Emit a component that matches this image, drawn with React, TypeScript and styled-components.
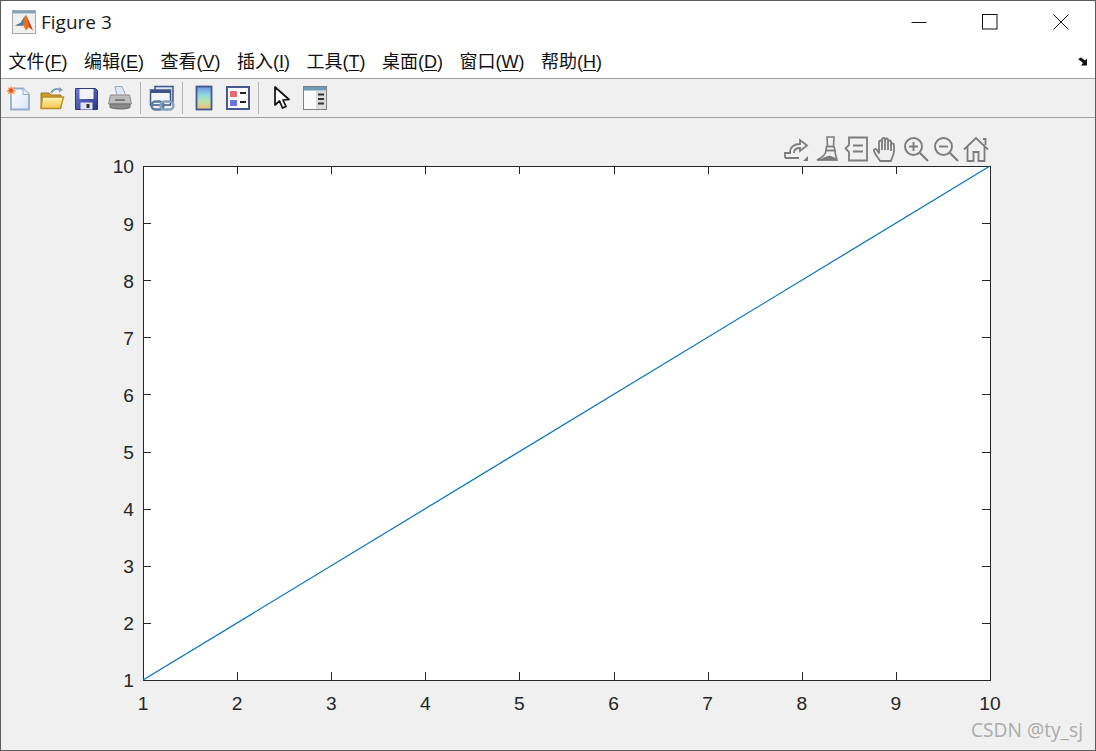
import React from "react";
import styled, { createGlobalStyle } from "styled-components";

const Global = createGlobalStyle`
  html, body { margin: 0; padding: 0; background: #fff; }
  #root { width: 1096px; height: 751px; }
`;

const Window = styled.div`
  width: 1096px; height: 751px; box-sizing: border-box; border: 1px solid #5c5c5c;
  display: flex; flex-direction: column; background: #f0f0f0; overflow: hidden;
  font-family: "Liberation Sans", Arial, sans-serif;
`;
const TitleBar = styled.div`
  height: 43px; flex: none; background: #fff; display: flex; align-items: center; padding: 0 0 0 11px;
`;
const AppIcon = styled.svg`width: 24px; height: 24px; flex: none; margin-top: -1px;`;
const Title = styled.div`
  margin-left: 5px; font: 19px "Open Sans", sans-serif; color: #1a1a1a; flex: 1; margin-top: -2px;
`;
const WinButtons = styled.div`display: flex; align-self: stretch; align-items: center; margin-right: -1px;`;
const WinButton = styled.div`
  width: 71px; height: 43px; display: flex; align-items: center; justify-content: center;
  margin-top: -1px;
`;
const MenuBar = styled.div`
  flex: none; background: #fff; display: flex; align-items: center; padding: 0 8px 3px 7.5px;
  box-sizing: border-box; gap: 16.5px; border-bottom: 1px solid #a0a0a0; position: relative; height: 35px;
`;
const MenuItem = styled.span`
  font: 18px "Liberation Sans", "Noto Sans CJK SC", sans-serif; color: #111; white-space: nowrap;
  u { text-underline-offset: 2px; }
`;
const Undock = styled.svg`position: absolute; right: 5px; top: 13px; width: 12px; height: 10px;`;
const ToolBar = styled.div`
  height: 39px; box-sizing: border-box; flex: none; background: #f0f0f0; border-bottom: 1px solid #a0a0a0; display: flex; align-items: center;
`;
const ToolButton = styled.div<{ $shift?: number }>`
  width: 34px; height: 38px; display: flex; align-items: center; justify-content: center;
  margin-left: ${(p) => p.$shift ?? 0}px;
`;
const ToolIcon = styled.svg`width: 26px; height: 26px;`;
const ToolSep = styled.div<{ $after?: number }>`
  width: 1px; height: 32px; background: #b4b4b4; margin: 0 ${(p) => p.$after ?? 3}px 0 3px;
`;
const Canvas = styled.div`flex: 1; position: relative; background: #f0f0f0;`;
const Plot = styled.svg`display: block; width: 1094px; height: 632px;`;
const AxesBar = styled.div`
  position: absolute; top: 18px; left: 782px; display: flex; gap: 4px;
`;
const AxesIcon = styled.svg`width: 26px; height: 26px; flex: none; color: #7c7c7c;`;
const Watermark = styled.div`
  position: absolute; right: 12px; bottom: 7px; font: 19.200px "Open Sans", sans-serif; color: #ababab;
`;
const Tick = styled.text`font: 19.200px "Liberation Sans", Arial, sans-serif; fill: #262626;`;

const menus: [string, string][] = [["文件", "F"], ["编辑", "E"], ["查看", "V"], ["插入", "I"], ["工具", "T"], ["桌面", "D"], ["窗口", "W"], ["帮助", "H"]];

const L = 143, R = 990, T = 166, B = 680;
const nums = [1, 2, 3, 4, 5, 6, 7, 8, 9, 10];
const xAt = (n: number) => L + ((R - L) * (n - 1)) / 9;
const yAt = (n: number) => B - ((B - T) * (n - 1)) / 9;

export default function App() {
  return (
    <Window>
      <Global />
      <TitleBar>
        <AppIcon viewBox="0 0 24 24">
          <rect x="0.500" y="0.500" width="23" height="23" fill="#f0f0f0" stroke="#a8a8a8" />
          <rect x="1" y="1" width="22" height="2.400" fill="#7fa3bd" />
          <path d="M3 15.500l5.500-2.500 4-6.500 1.500-1.500 3 6.500 4 9-4-3.500-3 3.500-2.500-5-2 .5z" fill="#ea6f1f" />
          <path d="M14 5l3 6.500 4 9-4-3.500-1-6z" fill="#c8401a" />
          <path d="M3 15.500l5.500-2.500 4-6.500-1.500 8.500-2 .5z" fill="#2f86c4" />
        </AppIcon>
        <Title>Figure 3</Title>
        <WinButtons>
          <WinButton>
            <svg width="16" height="16" viewBox="0 0 16 16"><path d="M0.500 8.500h15" stroke="#111" fill="none" /></svg>
          </WinButton>
          <WinButton>
            <svg width="16" height="16" viewBox="0 0 16 16"><rect x="0.500" y="0.500" width="14.500" height="14.500" stroke="#111" fill="none" /></svg>
          </WinButton>
          <WinButton>
            <svg width="16" height="16" viewBox="0 0 16 16"><path d="M0.500 0.500l15 15M15.500 0.500l-15 15" stroke="#111" fill="none" /></svg>
          </WinButton>
        </WinButtons>
      </TitleBar>
      <MenuBar>
        {menus.map(([zh, k]) => (
          <MenuItem key={k}>{zh}(<u>{k}</u>)</MenuItem>
        ))}
        <Undock viewBox="0 0 12 10">
          <path d="M0 2l3-1.500 4 3 2-2v7H3l2-2.500L2 3.500z" fill="#111" />
        </Undock>
      </MenuBar>
      <ToolBar>
        <ToolButton>
          <ToolIcon viewBox="0 0 26 26">
            <defs>
              <linearGradient id="doc" x1="0" y1="0" x2="1" y2="1">
                <stop offset="0" stopColor="#ffffff" />
                <stop offset="1" stopColor="#d6e6f7" />
              </linearGradient>
              <linearGradient id="fold" x1="0" y1="0" x2="0" y2="1">
                <stop offset="0" stopColor="#fff2b0" />
                <stop offset="1" stopColor="#f2c84e" />
              </linearGradient>
              <linearGradient id="disk" x1="0" y1="0" x2="1" y2="1">
                <stop offset="0" stopColor="#6d7bd8" />
                <stop offset="1" stopColor="#2c3486" />
              </linearGradient>
              <linearGradient id="cb" x1="0" y1="0" x2="0" y2="1">
                <stop offset="0" stopColor="#6f94dc" />
                <stop offset="0.350" stopColor="#8fd6e0" />
                <stop offset="0.650" stopColor="#b8e4a8" />
                <stop offset="1" stopColor="#f4b878" />
              </linearGradient>
            </defs>
            <path d="M6 3.500h12l6 6v15H6z" fill="url(#doc)" stroke="#94accb" strokeWidth="1.800" />
            <path d="M18 3.500v6h6" fill="#e6eff9" stroke="#94accb" />
            <path d="M6 0.500l1.500 2.500 2.500-1-1 2.500 2.500 1.500-2.500 1 1 2.500-2.500-1L6 11l-1-2.500-2.500 1 1-2.500L1 6l2.500-1.500-1-2.500 2.500 1z" fill="#f3a868" />
            <circle cx="6" cy="5.500" r="2.200" fill="#e4552c" />
          </ToolIcon>
        </ToolButton>
        <ToolButton>
          <ToolIcon viewBox="0 0 26 26">
            <path d="M2 8h8l2 2h10v13H2z" fill="#c99a2a" stroke="#a17a22" />
            <path d="M3.500 12h21l-3 11.500H2z" fill="url(#fold)" stroke="#b98f2e" strokeWidth="1.400" />
            <path d="M12 8c2-4 6-5 9-3" fill="none" stroke="#7f9fc0" strokeWidth="2" />
            <path d="M20 2l4 3-4 2.500z" fill="#7f9fc0" />
          </ToolIcon>
        </ToolButton>
        <ToolButton>
          <ToolIcon viewBox="0 0 26 26">
            <path d="M2.500 3.500h20l2 2v19h-22z" fill="url(#disk)" stroke="#2d3580" />
            <rect x="6.500" y="4" width="14" height="10" fill="#f0f2fc" />
            <rect x="7.500" y="17.500" width="12" height="7" fill="#e2e3ec" />
            <rect x="13.500" y="19" width="3" height="4" fill="#333" />
          </ToolIcon>
        </ToolButton>
        <ToolButton>
          <ToolIcon viewBox="0 0 26 26">
            <path d="M8 1.500h7l4 9.500H10z" fill="#dbe8f2" stroke="#9aa9b5" />
            <path d="M3.500 10h19l2 9h-23z" fill="#bcbcbc" stroke="#8a8a8a" />
            <path d="M3 19h20v3.500c-3 2-14 2-20 0z" fill="#8a8a8a" stroke="#6c6c6c" />
            <path d="M8 15h10" stroke="#666" strokeWidth="1.500" />
          </ToolIcon>
        </ToolButton>
        <ToolSep $after={4} />
        <ToolButton>
          <ToolIcon viewBox="0 0 26 26">
            <rect x="6" y="1.500" width="18" height="15" fill="#dde7f3" stroke="#3f5585" strokeWidth="1.500" />
            <rect x="1.500" y="5" width="20" height="15" fill="#f2f6fb" stroke="#3f5585" strokeWidth="1.500" />
            <rect x="2" y="5" width="19" height="3" fill="#3f5585" />
            <rect x="2.500" y="16.500" width="12" height="8" rx="4" fill="none" stroke="#5f7ba0" strokeWidth="2.400" />
            <rect x="11.500" y="16.500" width="13" height="8" rx="4" fill="none" stroke="#86a0bf" strokeWidth="2.400" />
          </ToolIcon>
        </ToolButton>
        <ToolSep />
        <ToolButton $shift={1}>
          <ToolIcon viewBox="0 0 26 26">
            <rect x="5.500" y="1.500" width="15" height="23" fill="url(#cb)" stroke="#45598a" strokeWidth="1.800" />
          </ToolIcon>
        </ToolButton>
        <ToolButton>
          <ToolIcon viewBox="0 0 26 26">
            <rect x="2" y="2" width="22" height="22" fill="#fff" stroke="#45598a" strokeWidth="2" />
            <rect x="5" y="6" width="7" height="6" fill="#e86a6a" />
            <rect x="5" y="15" width="7" height="6" fill="#6b74e0" />
            <path d="M15 8h6M15 17h6" stroke="#222" strokeWidth="2" />
          </ToolIcon>
        </ToolButton>
        <ToolSep />
        <ToolButton $shift={3}>
          <ToolIcon viewBox="0 0 26 26">
            <path d="M6 2l0 18 4.500-4 3 7 3.500-1.500-3-6.500 6-.500z" fill="#fff" stroke="#111" strokeWidth="1.700" strokeLinejoin="round" />
          </ToolIcon>
        </ToolButton>
        <ToolButton $shift={-1}>
          <ToolIcon viewBox="0 0 26 26">
            <rect x="1.500" y="1.500" width="23" height="23" fill="#f6f6f6" stroke="#808080" />
            <rect x="2" y="2" width="22" height="3.500" fill="#6f9bb5" />
            <rect x="2" y="6" width="12" height="18" fill="#fbfbfb" />
            <rect x="14" y="6" width="10" height="18" fill="#dcdcdc" />
            <path d="M16 9.500h6M16 14h6M16 18.500h6" stroke="#333" strokeWidth="2" />
          </ToolIcon>
        </ToolButton>
      </ToolBar>
      <Canvas>
        <Plot viewBox="1 118 1094 632">
          <rect x={L} y={T} width={R - L} height={B - T} fill="#fff" stroke="#262626" shapeRendering="crispEdges" />
          {nums.slice(1, 9).map((n) => (
            <g key={n} stroke="#262626" shapeRendering="crispEdges">
              <path d={`M${Math.round(xAt(n))} ${B}v-8M${Math.round(xAt(n))} ${T}v8`} />
              <path d={`M${L} ${Math.round(yAt(n))}h8M${R} ${Math.round(yAt(n))}h-8`} />
            </g>
          ))}
          <line x1={L} y1={B} x2={R} y2={T} stroke="#0072bd" strokeWidth="1.200" />
          {nums.map((n) => (
            <Tick key={`x${n}`} x={xAt(n)} y={710} textAnchor="middle">{n}</Tick>
          ))}
          {nums.map((n) => (
            <Tick key={`y${n}`} x={134} y={yAt(n) + 7.400} textAnchor="end">{n}</Tick>
          ))}
        </Plot>
        <AxesBar>
          <AxesIcon viewBox="0 0 26 26" fill="none" stroke="currentColor" strokeWidth="1.800">
            <path d="M2 22v-5h6M2 22h14" />
            <path d="M7 17c0-6 4-9 10-9V4l7 5.500-7 5.500v-3c-4 0-6 2-6 5" />
            <path d="M20 25l5-5v5z" fill="currentColor" stroke="none" />
          </AxesIcon>
          <AxesIcon viewBox="0 0 26 26" fill="none" stroke="currentColor" strokeWidth="1.600">
            <path d="M14 1h7l-.500 9.500h-6z" />
            <path d="M13.500 10.500h7.500l1 4h-9z" />
            <path d="M13 14.500c0 4-4 7-9 9.500h20c-1-3-2-6-2-9.500z" />
            <path d="M4 24c5-1 11-5 14-4l6 2.500V24.500H4z" fill="currentColor" stroke="none" />
          </AxesIcon>
          <AxesIcon viewBox="0 0 26 26" fill="none" stroke="currentColor" strokeWidth="1.800">
            <path d="M6 1.500h18v23H6v-8.500l-3.500-3.500L6 9z" />
            <path d="M10 9.500h10M10 15.500h10" />
          </AxesIcon>
          <AxesIcon viewBox="0 0 26 26" fill="none" stroke="currentColor" strokeWidth="1.800" strokeLinejoin="round">
            <path d="M7 25c-1-3-5-6-6-10-.500-2 2-2.500 3-1l2 3V6c0-2 3-2 3 0V3.500c0-2 3-2 3 0V4c0-2 3-2 3 0v2c0-2 3-2 3 0v2.500c.500-1.500 3-1.500 3 .5v6c0 4-2 6-3 10z" />
            <path d="M9 6v8M12 4v10M15 6v8M18 8v7" />
          </AxesIcon>
          <AxesIcon viewBox="0 0 26 26" fill="none" stroke="currentColor" strokeWidth="1.900">
            <circle cx="10.500" cy="10.500" r="8.500" />
            <path d="M10.500 6v9M6 10.500h9" />
            <path d="M17 17l8 8" strokeWidth="2.200" />
          </AxesIcon>
          <AxesIcon viewBox="0 0 26 26" fill="none" stroke="currentColor" strokeWidth="1.900">
            <circle cx="10.500" cy="10.500" r="8.500" />
            <path d="M6 10.500h9" />
            <path d="M17 17l8 8" strokeWidth="2.200" />
          </AxesIcon>
          <AxesIcon viewBox="0 0 26 26" fill="none" stroke="currentColor" strokeWidth="1.800">
            <path d="M1 13.500L13 2l12 11.500" />
            <path d="M4.500 11v14h6v-9h5v9h6V11" />
            <path d="M20 3h2.500v6" />
          </AxesIcon>
        </AxesBar>
        <Watermark>CSDN @ty_sj</Watermark>
      </Canvas>
    </Window>
  );
}
